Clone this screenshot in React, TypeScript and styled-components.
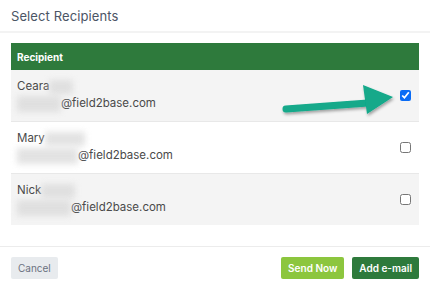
import React, { useState } from 'react'
import styled, { createGlobalStyle } from 'styled-components'

const GlobalStyle = createGlobalStyle`
  html, body {
    margin: 0;
    padding: 0;
    background: #ffffff;
    font-family: Inter, "Noto Sans", sans-serif;
  }
`

const Modal = styled.div`
  width: 430px;
  height: 289px;
  display: flex;
  flex-direction: column;
  background: #fff;
  position: relative;
  overflow: hidden;
`

const Header = styled.div`
  height: 33px;
  display: flex;
  align-items: center;
  padding: 0 11px;
  border-bottom: 2px solid #f3f3f3;
`

const Title = styled.h2`
  margin: 0;
  font-size: 13px;
  font-weight: 400;
  color: #4b5565;
  letter-spacing: 0.1px;
`

const Body = styled.div`
  padding: 10px 11px 21px;
  border-bottom: 1px solid #ececec;
`

const Table = styled.div`
  display: flex;
  flex-direction: column;
`

const HeadRow = styled.div`
  height: 27px;
  display: flex;
  align-items: center;
  padding: 0 6px;
  background: #2e7a3c;
  color: #fff;
  font-size: 10px;
  font-weight: 700;
`

const Row = styled.div<{ $shade: boolean; $last?: boolean }>`
  display: flex;
  align-items: center;
  justify-content: space-between;
  padding: 8px 5px 9px 6px;
  background: ${(p) => (p.$shade ? '#f4f4f4' : '#ffffff')};
  border-bottom: ${(p) => (p.$last ? 'none' : '1px solid #e8e8e8')};
  font-size: 11.5px;
  color: #4a4a4a;
`

const Lines = styled.div`
  display: flex;
  flex-direction: column;
  line-height: 17px;
`

const Line = styled.div`
  display: flex;
  align-items: center;
`

const Smudge = styled.span<{ $w: number; $h: number }>`
  display: inline-block;
  width: ${(p) => p.$w}px;
  height: ${(p) => p.$h}px;
  background: #d9d9d9;
  filter: blur(3px);
  opacity: 0.75;
`

const Check = styled.input`
  width: 11px;
  height: 11px;
  margin: 3px;
  accent-color: #0a6cf5;
`

const Footer = styled.div`
  flex: 1;
  display: flex;
  align-items: flex-start;
  justify-content: space-between;
  padding: 10px 11px;
`

const Right = styled.div`
  display: flex;
  gap: 8px;
`

const Button = styled.button<{ $variant: 'muted' | 'light' | 'dark' }>`
  height: 22px;
  padding: 0 7px;
  border: none;
  border-radius: 2px;
  font-family: Inter, "Noto Sans", sans-serif;
  font-size: 10px;
  font-weight: ${(p) => (p.$variant === 'muted' ? 400 : 600)};
  color: ${(p) => (p.$variant === 'muted' ? '#6b7280' : '#ffffff')};
  background: ${(p) =>
    p.$variant === 'muted' ? '#e8ebee' : p.$variant === 'light' ? '#8cc63e' : '#2e7a3c'};
`

const Arrow = styled.svg`
  position: absolute;
  left: 276px;
  top: 80px;
  pointer-events: none;
`

type Recipient = {
  name: string
  nameBlur: number
  mailBlur: number
}

const recipients: Recipient[] = [
  { name: 'Ceara', nameBlur: 24, mailBlur: 44 },
  { name: 'Mary', nameBlur: 40, mailBlur: 61 },
  { name: 'Nick', nameBlur: 34, mailBlur: 54 }
]

function App() {
  const [checked, setChecked] = useState<boolean[]>([true, false, false])

  const toggle = (i: number) => {
    setChecked(checked.map((c, j) => (j === i ? !c : c)))
  }

  return (
    <Modal>
      <GlobalStyle />
      <Header>
        <Title>Select Recipients</Title>
      </Header>
      <Body>
        <Table>
          <HeadRow>Recipient</HeadRow>
          {recipients.map((r, i) => (
            <Row key={r.name} $shade={i % 2 === 0} $last={i === recipients.length - 1}>
              <Lines>
                <Line>
                  {r.name}
                  <Smudge $w={r.nameBlur} $h={14} />
                </Line>
                <Line>
                  <Smudge $w={r.mailBlur} $h={16} />
                  @field2base.com
                </Line>
              </Lines>
              <Check type='checkbox' checked={checked[i]} onChange={() => toggle(i)} />
            </Row>
          ))}
        </Table>
      </Body>
      <Footer>
        <Button $variant='muted'>Cancel</Button>
        <Right>
          <Button $variant='light'>Send Now</Button>
          <Button $variant='dark'>Add e-mail</Button>
        </Right>
      </Footer>
      <Arrow width='124' height='40' viewBox='0 0 124 40'>
        <defs>
          <filter id='sh' x='-20%' y='-40%' width='140%' height='180%'>
            <feDropShadow dx='1' dy='2' stdDeviation='1.5' floodColor='#000' floodOpacity='0.35' />
          </filter>
        </defs>
        <g filter='url(#sh)'>
          <line x1='10' y1='29' x2='92' y2='23' stroke='#12a98a' strokeWidth='7' strokeLinecap='round' />
          <polygon points='87,5 117,17 91,34' fill='#12a98a' />
        </g>
      </Arrow>
    </Modal>
  )
}

export default App
